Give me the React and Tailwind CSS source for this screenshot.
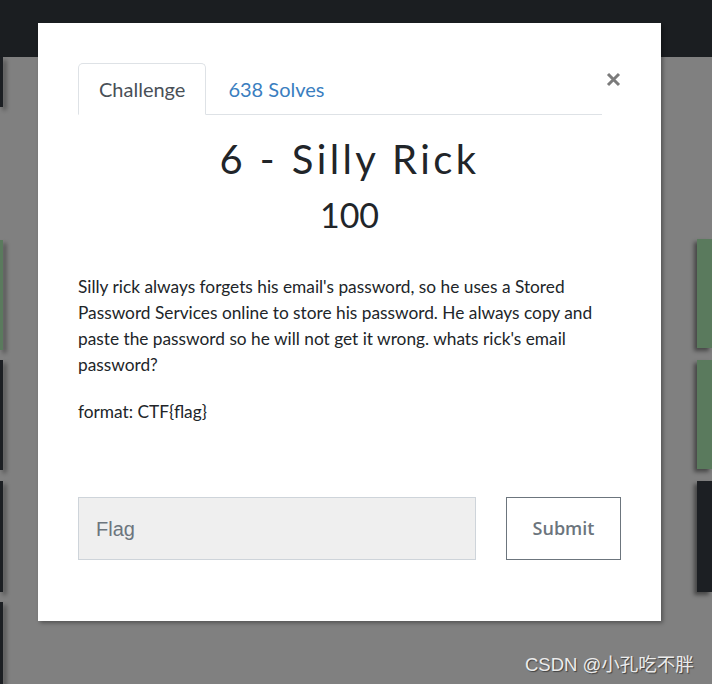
export default function App() {
  return (
    <div className="relative w-[712px] h-[684px] overflow-hidden bg-[#808080]" style={{ fontFamily: "Lato, 'Liberation Sans', sans-serif" }}>
      {/* navbar */}
      <div className="h-[57px] bg-[#1b1e21]" />
      {/* background cards */}
      <div className="flex justify-between">
        <div className="flex flex-col w-[3px]">
          <div className="h-[50px] bg-[#1c1f23] shadow-[3px_3px_4px_rgba(0,0,0,0.45)]" />
          <div className="mt-[133px] h-[110px] bg-[#5a7a5d] shadow-[3px_3px_4px_rgba(0,0,0,0.45)]" />
          <div className="mt-[10px] h-[110px] bg-[#1c1f23] shadow-[3px_3px_4px_rgba(0,0,0,0.45)]" />
          <div className="mt-[11px] h-[111px] bg-[#1c1f23] shadow-[3px_3px_4px_rgba(0,0,0,0.45)]" />
          <div className="mt-[10px] h-[100px] bg-[#1c1f23] shadow-[3px_3px_4px_rgba(0,0,0,0.45)]" />
        </div>
        <div className="flex flex-col w-[15px]">
          <div className="mt-[182px] h-[109px] bg-[#5a7a5d] shadow-[-3px_3px_4px_rgba(0,0,0,0.45)]" />
          <div className="mt-[12px] h-[109px] bg-[#5a7a5d] shadow-[-3px_3px_4px_rgba(0,0,0,0.45)]" />
          <div className="mt-[12px] h-[111px] bg-[#1c1f23] shadow-[-3px_3px_4px_rgba(0,0,0,0.45)]" />
        </div>
      </div>

      {/* modal */}
      <div className="absolute left-[38px] top-[23px] w-[623px] h-[598px] bg-white pt-10 px-10 shadow-[2px_2px_4px_rgba(0,0,0,0.35)]">
        <div className="flex items-start">
          <div className="flex-1 flex border-b border-[#dee2e6]">
            <div className="-mb-px h-[52px] px-5 flex items-center border border-[#dee2e6] border-b-white rounded-t-[5px] bg-white text-[20px] text-[#495057]">
              Challenge
            </div>
            <div className="h-[51px] px-[22px] flex items-center text-[20px] text-[#3a7ec0]">
              638 Solves
            </div>
          </div>
          <div className="w-[19px] flex justify-end pt-[9px]">
            <svg width="15" height="15" viewBox="0 0 15 15">
              <path d="M2 2 L13 13 M13 2 L2 13" stroke="#7b7b7b" strokeWidth="3" strokeLinecap="butt" />
            </svg>
          </div>
        </div>

        <div className="mt-5 text-center text-[40px] leading-[48px] text-[#212529] tracking-[0.085em]" style={{ fontFamily: "Lato, sans-serif", fontWeight: 400 }}>
          6 - Silly Rick
        </div>
        <div className="mt-3 text-center text-[34px] leading-[40px] text-[#212529]" style={{ fontFamily: "Lato, sans-serif" }}>
          100
        </div>

        <p className="mt-[39px] text-[17.3px] leading-[26px] text-[#212529]">
          Silly rick always forgets his email's password, so he uses a Stored Password Services online to store his password. He always copy and paste the password so he will not get it wrong. whats rick's email password?
        </p>
        <p className="mt-[21px] text-[17.3px] leading-[26px] text-[#212529]">format: CTF{"{"}flag{"}"}</p>

        <div className="mt-[72px] flex items-center">
          <div className="w-[398px] h-[63px] bg-[#efefef] border border-[#ced4da] flex items-center pl-[17px] text-[20px] text-[#6c757d]" style={{ fontFamily: "'Liberation Sans', Arial, sans-serif" }}>
            Flag
          </div>
          <div className="ml-[30px] w-[115px] h-[63px] border border-[#6c757d] flex items-center justify-center text-[18px] font-semibold text-[#6c757d]" style={{ fontFamily: "'Open Sans', sans-serif" }}>
            Submit
          </div>
        </div>
      </div>

      {/* watermark */}
      <div className="absolute left-[525px] top-[651px] text-[18.5px] text-[#ececec] [text-shadow:1px_1px_1px_rgba(0,0,0,0.5)]" style={{ fontFamily: "'Liberation Sans', 'Noto Sans CJK SC', sans-serif" }}>
        CSDN @小孔吃不胖
      </div>
    </div>
  );
}
